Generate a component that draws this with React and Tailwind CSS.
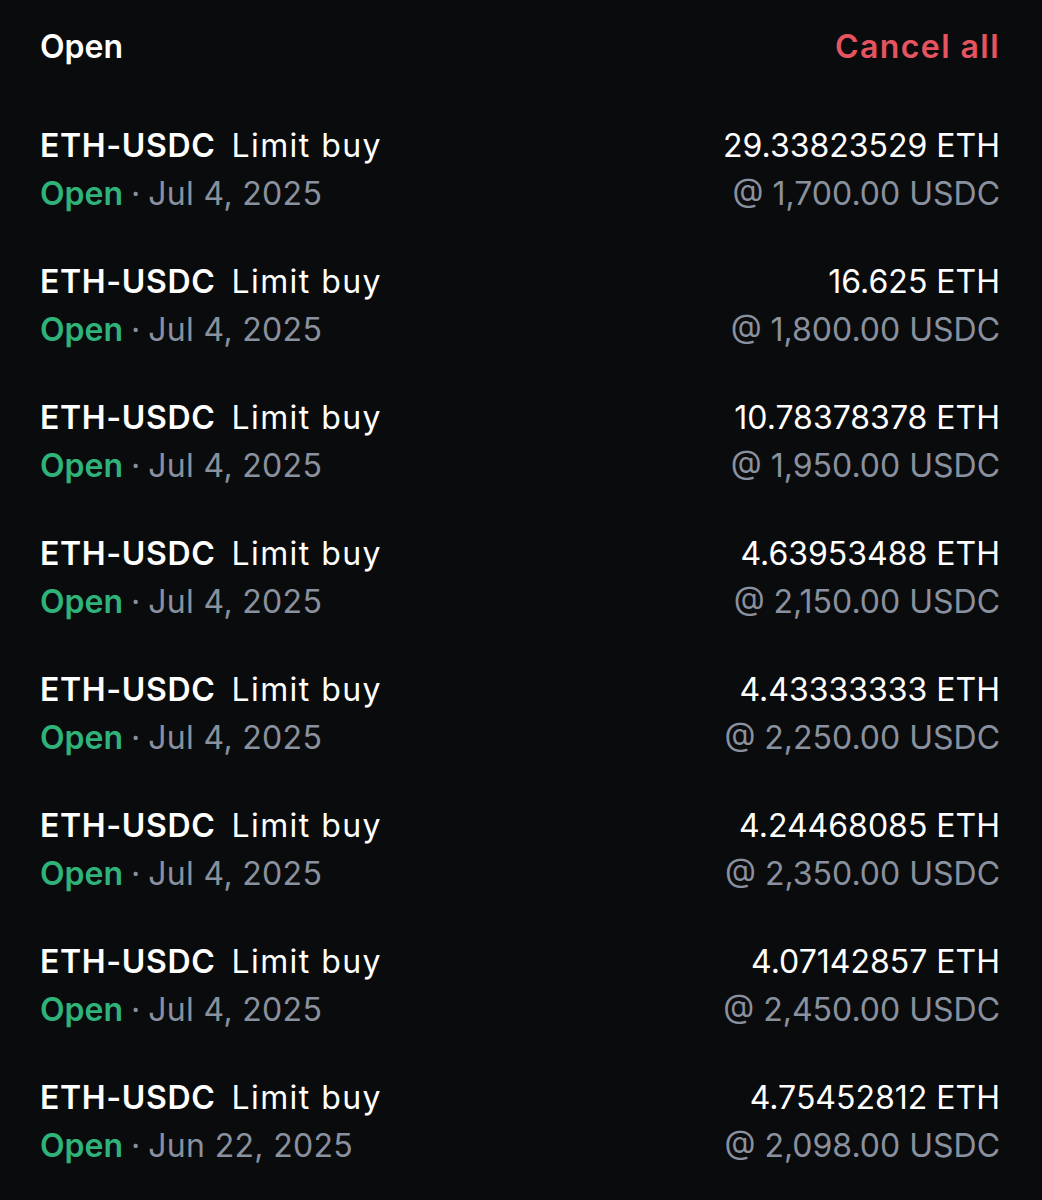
import React from "react";

const orders = [
  { amount: "29.33823529 ETH", price: "@ 1,700.00 USDC", date: "Jul 4, 2025" },
  { amount: "16.625 ETH", price: "@ 1,800.00 USDC", date: "Jul 4, 2025" },
  { amount: "10.78378378 ETH", price: "@ 1,950.00 USDC", date: "Jul 4, 2025" },
  { amount: "4.63953488 ETH", price: "@ 2,150.00 USDC", date: "Jul 4, 2025" },
  { amount: "4.43333333 ETH", price: "@ 2,250.00 USDC", date: "Jul 4, 2025" },
  { amount: "4.24468085 ETH", price: "@ 2,350.00 USDC", date: "Jul 4, 2025" },
  { amount: "4.07142857 ETH", price: "@ 2,450.00 USDC", date: "Jul 4, 2025" },
  { amount: "4.75452812 ETH", price: "@ 2,098.00 USDC", date: "Jun 22, 2025" },
];

function OrderRow({ o }) {
  return (
    <div className="flex justify-between">
      <div className="flex flex-col">
        <div className="flex items-center gap-4 h-[49px]">
          <span className="font-semibold text-white tracking-[0.02em]">ETH-USDC</span>
          <span className="text-white tracking-[0.045em]">Limit buy</span>
        </div>
        <div className="flex items-center h-[48px]">
          <span className="font-semibold text-[#2fb37a]">Open</span>
          <span className="text-[#8a919e] mx-2">·</span>
          <span className="text-[#8a919e] tracking-[0.01em]">{o.date}</span>
        </div>
      </div>
      <div className="flex flex-col items-end">
        <div className="h-[49px] flex items-center text-white">{o.amount}</div>
        <div className="h-[48px] flex items-center text-[#8a919e]">{o.price}</div>
      </div>
    </div>
  );
}

export default function App() {
  return (
    <div
      className="w-[1042px] h-[1200px] bg-[#0a0b0d] pl-[40px] pr-[42px] pt-[23px] overflow-hidden"
      style={{ fontFamily: "Inter, 'Noto Sans', sans-serif" }}
    >
      <div className="flex justify-between items-center h-[48px] text-[32px] font-semibold">
        <span className="text-white">Open</span>
        <span className="text-[#e5545f] tracking-[0.045em]">Cancel all</span>
      </div>
      <div className="mt-[50px] flex flex-col gap-[39px] text-[32px]">
        {orders.map((o, i) => (
          <OrderRow key={i} o={o} />
        ))}
      </div>
    </div>
  );
}
